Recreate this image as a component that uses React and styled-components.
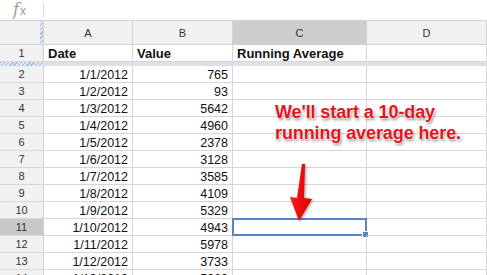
import React from 'react'
import styled, { createGlobalStyle } from 'styled-components'

const GlobalStyle = createGlobalStyle`
  body {
    margin: 0;
    background: #fff;
    overflow: hidden;
    font-family: "Liberation Sans", Arial, sans-serif;
  }
`

const rows = [
  ['1/1/2012', '765'],
  ['1/2/2012', '93'],
  ['1/3/2012', '5642'],
  ['1/4/2012', '4960'],
  ['1/5/2012', '2378'],
  ['1/6/2012', '3128'],
  ['1/7/2012', '3585'],
  ['1/8/2012', '4109'],
  ['1/9/2012', '5329'],
  ['1/10/2012', '4943'],
  ['1/11/2012', '5978'],
  ['1/12/2012', '3733'],
  ['1/13/2012', '5060'],
]

const hatch = 'repeating-linear-gradient(135deg, #9fb8e3 0 1px, #dfe7f5 1px 3px)'

const Page = styled.div`
  position: relative;
  width: 487px;
  height: 275px;
  overflow: hidden;
`

const FormulaBar = styled.div`
  height: 21px;
  display: flex;
  align-items: center;
  box-sizing: border-box;
  border-bottom: 1px solid #d4d4d4;
`

const Fx = styled.div`
  width: 43px;
  padding-left: 13px;
  box-sizing: border-box;
  color: #9a9a9a;
  font-family: "DejaVu Serif", "Liberation Serif", serif;
  font-style: italic;
  font-size: 16px;
  line-height: 20px;
  span {
    font-family: "Liberation Sans", sans-serif;
    font-style: normal;
    font-size: 12px;
    margin-left: 1px;
  }
`

const Divider = styled.div`
  width: 1px;
  height: 14px;
  background: #dcdcdc;
`

const Sheet = styled.div`
  display: grid;
  grid-template-columns: 44px 89px 100px 134px 120px;
  grid-template-rows: 24px 17px 4px;
  grid-auto-rows: 17px;
`

const Corner = styled.div`
  box-sizing: border-box;
  border-right: 1px solid #cfcfcf;
  border-bottom: 1px solid #cfcfcf;
  background: ${hatch} right / 3px 100% no-repeat, #f1f1f1;
`

const ColHead = styled.div`
  box-sizing: border-box;
  border-right: 1px solid #d2d2d2;
  border-bottom: 1px solid #cfcfcf;
  background: ${p => (p.$active ? '#cdcdcd' : '#f1f1f1')};
  color: #333;
  font-size: 11px;
  display: flex;
  align-items: center;
  justify-content: center;
`

const RowHead = styled.div`
  box-sizing: border-box;
  border-right: 1px solid #d2d2d2;
  border-bottom: 1px solid #d8d8d8;
  background: ${p => (p.$active ? '#c8c8c8' : '#f1f1f1')};
  color: #333;
  font-size: 11px;
  display: flex;
  align-items: center;
  justify-content: center;
`

const Cell = styled.div`
  position: relative;
  box-sizing: border-box;
  border-right: 1px solid #d6d6d6;
  border-bottom: 1px solid #d6d6d6;
  padding: 1px 4px 0;
  font-size: ${p => (p.$bold ? '13px' : '12.5px')};
  font-weight: ${p => (p.$bold ? 700 : 400)};
  color: #111;
  display: flex;
  align-items: center;
  justify-content: ${p => (p.$right ? 'flex-end' : 'flex-start')};
  white-space: nowrap;
  ${p => p.$selected && `
    border: 2px solid #5a83c2;
    margin: -1px 0 0 -1px;
  `}
`

const Handle = styled.div`
  position: absolute;
  right: -4px;
  bottom: -4px;
  width: 5px;
  height: 5px;
  background: #5a83c2;
  border: 1px solid #fff;
`

const BandHead = styled.div`
  background: ${hatch};
`

const Band = styled.div`
  grid-column: span 4;
  background: #dde0e8;
`

const Note = styled.div`
  position: absolute;
  left: 275px;
  top: 102px;
  color: #e2141c;
  font-size: 18px;
  font-weight: 700;
  line-height: 21px;
  letter-spacing: -0.1px;
  text-shadow: 0 0 1px #fff, 0 0 2px #fff, 0 0 2px #fff, 1px 2px 3px rgba(0, 0, 0, 0.5);
`

const Arrow = styled.svg`
  position: absolute;
  left: 288px;
  top: 162px;
  filter: drop-shadow(1px 1px 1.5px rgba(0, 0, 0, 0.4));
`

export default function App() {
  return (
    <Page>
      <GlobalStyle />
      <FormulaBar>
        <Fx>f<span>x</span></Fx>
        <Divider />
      </FormulaBar>
      <Sheet>
        <Corner />
        <ColHead>A</ColHead>
        <ColHead>B</ColHead>
        <ColHead $active>C</ColHead>
        <ColHead>D</ColHead>

        <RowHead>1</RowHead>
        <Cell $bold>Date</Cell>
        <Cell $bold>Value</Cell>
        <Cell $bold>Running Average</Cell>
        <Cell />

        <BandHead />
        <Band />

        {rows.map(([date, value], i) => {
          const n = i + 2
          const sel = n === 11
          return (
            <React.Fragment key={n}>
              <RowHead $active={sel}>{n}</RowHead>
              <Cell $right>{date}</Cell>
              <Cell $right>{value}</Cell>
              <Cell $selected={sel}>{sel && <Handle />}</Cell>
              <Cell />
            </React.Fragment>
          )
        })}
      </Sheet>

      <Note>
        We'll start a 10-day<br />running average here.
      </Note>
      <Arrow width="28" height="62" viewBox="0 0 28 62">
        <defs>
          <linearGradient id="red" x1="0" y1="0" x2="1" y2="0">
            <stop offset="0" stopColor="#ff1a1a" />
            <stop offset="1" stopColor="#d80000" />
          </linearGradient>
        </defs>
        <polygon points="14,2 17,2 16,36 24,37 11,59 2,35 9,36" fill="url(#red)" />
      </Arrow>
    </Page>
  )
}
